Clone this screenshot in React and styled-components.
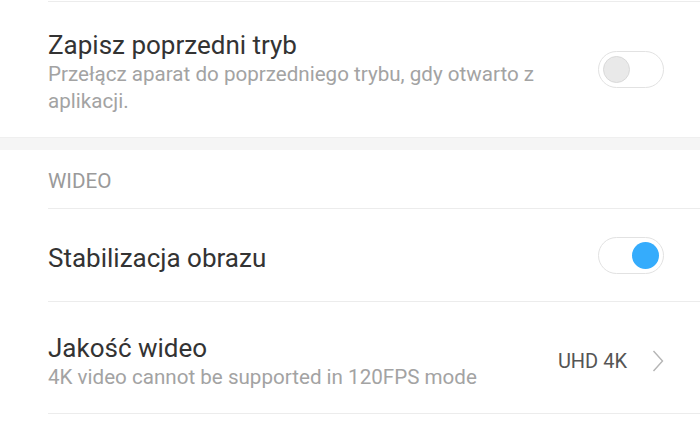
import React from "react";
import styled, { createGlobalStyle } from "styled-components";

const Global = createGlobalStyle`
  html, body { margin: 0; padding: 0; background: #ffffff; }
  body { font-family: Roboto, "Noto Sans", "Liberation Sans", sans-serif; -webkit-font-smoothing: antialiased; }
`;

const Page = styled.div`
  width: 700px;
  height: 441px;
  overflow: hidden;
  background: #ffffff;
  display: flex;
  flex-direction: column;
`;

const TopDivider = styled.div`
  margin-left: 48px;
  height: 1px;
  margin-top: 1px;
  background: #ececec;
`;

const Section = styled.div`
  padding-left: 48px;
  display: flex;
  flex-direction: column;
`;

const Row = styled.div`
  height: ${(p) => p.$h}px;
  box-sizing: border-box;
  padding-right: 36px;
  display: flex;
  align-items: center;
  justify-content: space-between;
  border-bottom: ${(p) => (p.$last ? "none" : "1px solid #ececec")};
`;

const TextCol = styled.div`
  display: flex;
  flex-direction: column;
  max-width: 510px;
  margin-top: ${(p) => p.$shift || 0}px;
`;

const Title = styled.div`
  font-size: 26px;
  line-height: 32px;
  color: #333333;
  margin-top: ${(p) => p.$shift || 0}px;
`;

const Sub = styled.div`
  font-size: 20.6px;
  line-height: 27px;
  color: #a3a3a3;
`;

const Band = styled.div`
  height: 13px;
  background: #f5f5f5;
  border-top: 1px solid #efefef;
  box-sizing: border-box;
`;

const Header = styled.div`
  height: 59px;
  box-sizing: border-box;
  display: flex;
  align-items: center;
  font-size: 20.7px;
  color: #9a9a9a;
  border-bottom: 1px solid #ececec;
  padding-top: 4px;
`;

const Toggle = styled.div`
  width: 66px;
  height: 37px;
  box-sizing: border-box;
  border: 1px solid #e2e2e2;
  border-radius: 19px;
  background: #ffffff;
  display: flex;
  align-items: center;
  justify-content: ${(p) => (p.$on ? "flex-end" : "flex-start")};
  padding: 0 4px;
  flex-shrink: 0;
`;

const Knob = styled.div`
  width: 27px;
  height: 27px;
  border-radius: 50%;
  box-sizing: border-box;
  background: ${(p) => (p.$on ? "#35acfc" : "#e9e9e9")};
  border: ${(p) => (p.$on ? "none" : "1px solid #d9d9d9")};
`;

const ValueWrap = styled.div`
  display: flex;
  align-items: center;
  gap: 25px;
  margin-top: 6px;
`;

const Value = styled.div`
  font-size: 20px;
  color: #555555;
`;

export default function App() {
  return (
    <Page>
      <Global />
      <TopDivider />
      <Section>
        <Row $h={135} $last>
          <TextCol $shift={4}>
            <Title>Zapisz poprzedni tryb</Title>
            <Sub>Przełącz aparat do poprzedniego trybu, gdy otwarto z aplikacji.</Sub>
          </TextCol>
          <Toggle>
            <Knob />
          </Toggle>
        </Row>
      </Section>
      <Band />
      <Section>
        <Header>WIDEO</Header>
        <Row $h={93}>
          <Title $shift={5}>Stabilizacja obrazu</Title>
          <Toggle $on>
            <Knob $on />
          </Toggle>
        </Row>
        <Row $h={112}>
          <TextCol $shift={8}>
            <Title>Jakość wideo</Title>
            <Sub>4K video cannot be supported in 120FPS mode</Sub>
          </TextCol>
          <ValueWrap>
            <Value>UHD 4K</Value>
            <svg width="12" height="22" viewBox="0 0 12 22">
              <path d="M1.5 1 L10.5 11 L1.5 21" fill="none" stroke="#b5b5b5" strokeWidth="1.4" />
            </svg>
          </ValueWrap>
        </Row>
      </Section>
    </Page>
  );
}
